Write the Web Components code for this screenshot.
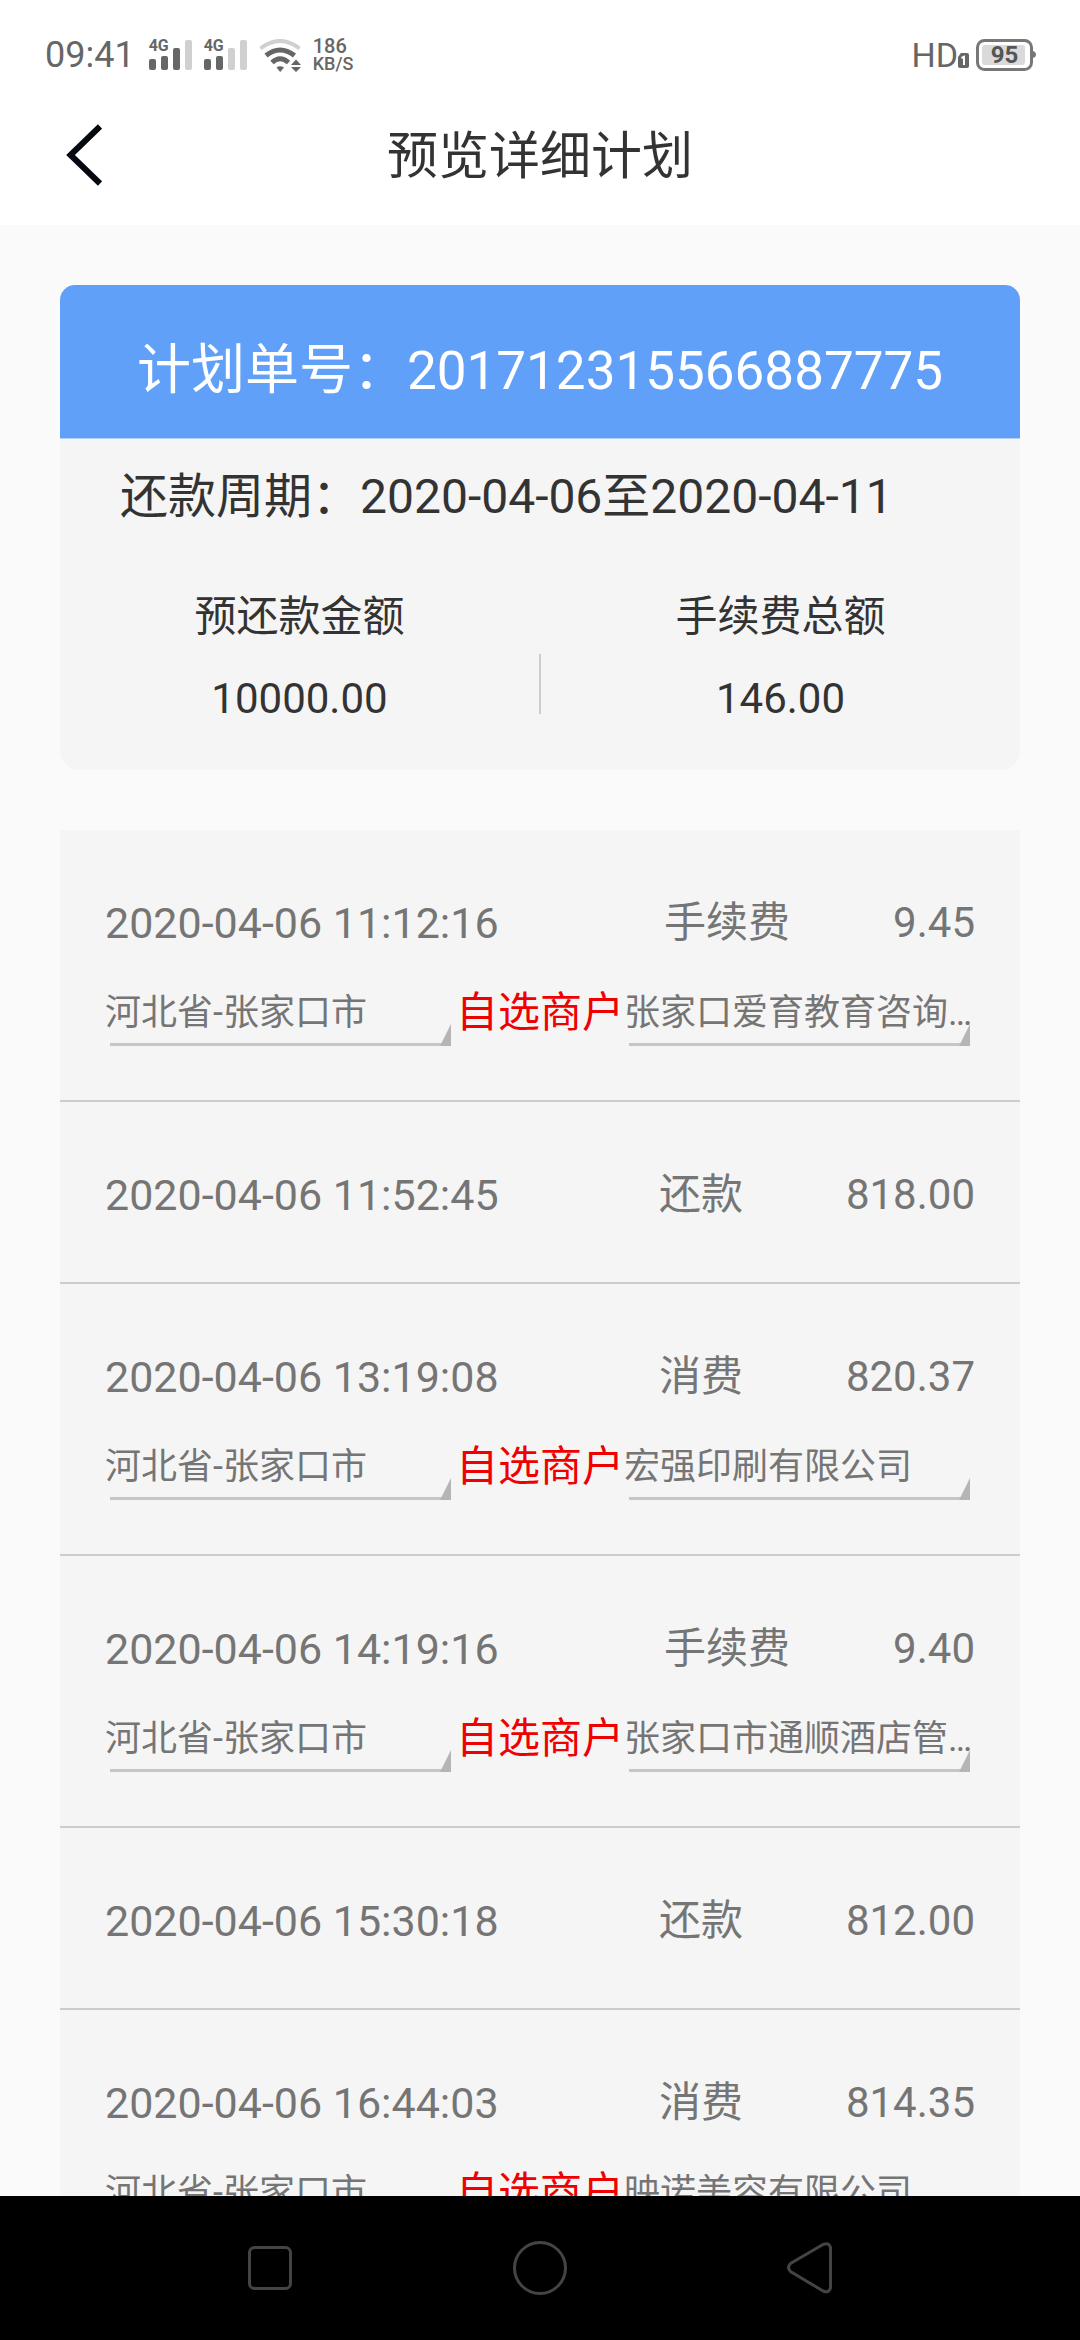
<!DOCTYPE html>
<html lang="zh-CN">
<head>
<meta charset="utf-8">
<meta name="viewport" content="width=device-width, initial-scale=1">
<title>预览详细计划</title>
<style>
  html, body { margin: 0; height: 100%; }
  body { font-family: Roboto, "Noto Sans CJK SC", sans-serif; background: #fafafa; color: #333; }
</style>
</head>
<body>
<plan-screen>
  <status-bar slot="top" time="09:41" rate="186" unit="KB/S" battery="95"></status-bar>
  <title-bar slot="top">预览详细计划</title-bar>

  <plan-card number="201712315566887775" period="2020-04-06至2020-04-11">
    <plan-total label="预还款金额">10000.00</plan-total>
    <plan-total label="手续费总额">146.00</plan-total>
  </plan-card>

  <plan-list>
    <plan-entry time="2020-04-06 11:12:16" type="手续费" amount="9.45" city="河北省-张家口市" merchant="张家口爱育教育咨询…"></plan-entry>
    <plan-entry time="2020-04-06 11:52:45" type="还款" amount="818.00"></plan-entry>
    <plan-entry time="2020-04-06 13:19:08" type="消费" amount="820.37" city="河北省-张家口市" merchant="宏强印刷有限公司"></plan-entry>
    <plan-entry time="2020-04-06 14:19:16" type="手续费" amount="9.40" city="河北省-张家口市" merchant="张家口市通顺酒店管…"></plan-entry>
    <plan-entry time="2020-04-06 15:30:18" type="还款" amount="812.00"></plan-entry>
    <plan-entry time="2020-04-06 16:44:03" type="消费" amount="814.35" city="河北省-张家口市" merchant="映诺美容有限公司"></plan-entry>
  </plan-list>

  <system-nav slot="bottom"></system-nav>
</plan-screen>

<script>
  class BaseElement extends HTMLElement {
    connectedCallback() {
      if (this.shadowRoot) return;
      this.attachShadow({ mode: 'open' }).innerHTML = this.render();
    }
    attr(name) { return this.getAttribute(name) || ''; }
  }

  customElements.define('plan-screen', class extends BaseElement {
    render() {
      return `
        <style>
          :host { display: flex; flex-direction: column; height: 100vh; }
          header, footer { flex: none; }
          header { background: #fff; }
          main { flex: 1; min-height: 0; overflow-y: auto; scrollbar-width: none;
                 display: flex; flex-direction: column; gap: 60px; padding: 60px 60px 0; }
          main::-webkit-scrollbar { display: none; }
        </style>
        <header><slot name="top"></slot></header>
        <main><slot></slot></main>
        <footer><slot name="bottom"></slot></footer>`;
    }
  });

  customElements.define('signal-icon', class extends BaseElement {
    render() {
      const level = Number(this.attr('level'));
      const tops = [20, 17, 9, 1];
      const bars = tops.map((y, i) =>
        `<rect x="${i * 12}" y="${y}" width="7" height="${31 - y}" rx="2" fill="${i < level ? '#666' : '#d0d0d0'}"/>`).join('');
      return `
        <style>
          :host { display: block; position: relative; width: 43px; height: 32px; }
          svg { display: block; }
          span { position: absolute; left: 0; top: 0; font-size: 16px; line-height: 14px; font-weight: 700; color: #666; }
        </style>
        <svg width="43" height="32" viewBox="0 0 43 32" aria-hidden="true">${bars}</svg>
        <span>4G</span>`;
    }
  });

  customElements.define('status-bar', class extends BaseElement {
    render() {
      return `
        <style>
          :host { display: flex; justify-content: space-between; align-items: center;
                  height: 60px; padding: 25px 44px 0 45px; color: #666; }
          .group { display: flex; align-items: center; }
          .left { gap: 12px; }
          .time { font-size: 36px; line-height: 42px; margin-right: 2px; }
          .rate { display: flex; flex-direction: column; font-weight: 500; }
          .rate b { font-weight: 500; font-size: 20px; line-height: 17px; }
          .rate i { font-style: normal; font-size: 18px; line-height: 17px; }
          .hd { font-size: 34px; line-height: 42px; }
          .sim { width: 11px; height: 15px; margin: 10px 7px 0 0; }
          .battery { position: relative; width: 60px; height: 32px; }
          .battery span { position: absolute; left: 0; top: 0; width: 57px; text-align: center;
                          font-size: 24px; line-height: 33px; font-weight: 700; color: #555; }
          svg { display: block; }
        </style>
        <div class="group left">
          <span class="time">${this.attr('time')}</span>
          <signal-icon level="3"></signal-icon>
          <signal-icon level="2"></signal-icon>
          <svg width="42" height="33" viewBox="0 0 42 33" fill="none" aria-hidden="true">
            <path d="M1.500 9.500Q21 -5.500 40.500 9.500" stroke="#d0d0d0" stroke-width="4"/>
            <path d="M7 16.500Q21 5.500 35.500 16.500" stroke="#666" stroke-width="5"/>
            <path d="M13 23.500Q21 16 29.500 23.500" stroke="#666" stroke-width="5"/>
            <path d="M17.500 28.500Q21 26 25 28.500L21.200 33Z" fill="#666"/>
            <path d="M37 20.500L42 26H32ZM32 28H42L37 33Z" fill="#666"/>
          </svg>
          <span class="rate"><b>${this.attr('rate')}</b><i>${this.attr('unit')}</i></span>
        </div>
        <div class="group">
          <span class="hd">HD</span>
          <svg class="sim" viewBox="0 0 11 15" aria-hidden="true">
            <path d="M3 0H9Q11 0 11 2V13Q11 15 9 15H2Q0 15 0 13V4Z" fill="#666"/>
            <path d="M3.500 5L6 3.800V12" stroke="#fff" stroke-width="2" fill="none"/>
          </svg>
          <div class="battery">
            <svg width="60" height="32" viewBox="0 0 60 32" aria-hidden="true">
              <rect x="1.500" y="1.500" width="54" height="29" rx="7" fill="#fff" stroke="#777" stroke-width="3"/>
              <rect x="6" y="6" width="43" height="20" rx="3" fill="#dadada"/>
              <path d="M57 12Q60 13 60 15.500Q60 18 57 19Z" fill="#777"/>
            </svg>
            <span>${this.attr('battery')}</span>
          </div>
        </div>`;
    }
  });

  customElements.define('title-bar', class extends BaseElement {
    render() {
      return `
        <style>
          :host { display: grid; grid-template-columns: 120px 1fr 120px; align-items: center; height: 140px; }
          button { display: flex; justify-content: flex-end; align-items: center; height: 140px;
                   padding: 0 18px 0 0; border: 0; background: none; }
          h1 { margin: 0; padding-top: 4px; text-align: center; font-size: 51px; line-height: 72px; font-weight: 400; }
        </style>
        <button type="button" aria-label="返回">
          <svg width="36" height="62" viewBox="0 0 36 62" fill="none" aria-hidden="true">
            <path d="M34 2.500L4.500 31L34 59.500" stroke="#050a10" stroke-width="6"/>
          </svg>
        </button>
        <h1><slot></slot></h1>`;
    }
  });

  customElements.define('plan-card', class extends BaseElement {
    render() {
      return `
        <style>
          :host { display: block; flex: none; background: #f5f5f5; border-radius: 15px 15px 20px 20px; overflow: hidden; }
          .number { padding: 50px 0 31px; background: #60a0f9; border-bottom: 1px solid #b5d0f6; color: #fff;
                    text-align: center; font-size: 54px; line-height: 72px; }
          .number span { font-size: 53px; }
          .period { padding: 22px 60px 20px; font-size: 48px; line-height: 72px; }
          .totals { display: grid; grid-template-columns: 1fr 2px 1fr; align-items: end; padding: 34px 0 41px; }
          .rule { height: 60px; margin-bottom: 15px; background: #ccc; }
        </style>
        <div class="number">计划单号：<span>${this.attr('number')}</span></div>
        <div class="period">还款周期：${this.attr('period')}</div>
        <div class="totals"><slot name="first"></slot><div class="rule"></div><slot name="second"></slot></div>`;
    }
    connectedCallback() {
      const [first, second] = this.querySelectorAll('plan-total');
      first.slot = 'first';
      second.slot = 'second';
      super.connectedCallback();
    }
  });

  customElements.define('plan-total', class extends BaseElement {
    render() {
      return `
        <style>
          :host { display: flex; flex-direction: column; gap: 22px; text-align: center; font-size: 42px; line-height: 60px; }
        </style>
        <span>${this.attr('label')}</span>
        <span><slot></slot></span>`;
    }
  });

  customElements.define('plan-list', class extends BaseElement {
    render() {
      return `
        <style>:host { display: block; flex: none; background: #f5f5f5; }</style>
        <slot></slot>`;
    }
  });

  customElements.define('line-select', class extends BaseElement {
    render() {
      return `
        <style>
          :host { display: block; position: relative; flex: 1; min-width: 0; height: 90px; }
          select { display: block; width: 100%; height: 90px; margin: 0; padding: 0; border: 0; border-radius: 0;
                   appearance: none; background: none; color: inherit; font: inherit; font-size: 36px; line-height: 52px;
                   text-overflow: ellipsis; opacity: 1; }
          .line, .corner { position: absolute; right: 5px; bottom: 12px; pointer-events: none; }
          .line { left: 5px; height: 3px; background: #c6c6c6; }
          .corner { width: 11px; height: 22px; background: #b5b5b5; clip-path: polygon(100% 0, 100% 100%, 0 100%); }
        </style>
        <select aria-label="${this.attr('label')}"><option>${this.attr('value')}</option></select>
        <span class="line"></span>
        <span class="corner"></span>`;
    }
  });

  customElements.define('plan-entry', class extends BaseElement {
    render() {
      const picker = this.hasAttribute('city') ? `
        <div class="row">
          <line-select label="城市" value="${this.attr('city')}"></line-select>
          <span class="pick">自选商户</span>
          <line-select label="商户" value="${this.attr('merchant')}"></line-select>
        </div>` : '';
      return `
        <style>
          :host { display: block; padding: 48px 45px 42px; border-bottom: 2px solid #ccc; color: #757575;
                  font-size: 42px; line-height: 60px; }
          .row { display: flex; align-items: center; height: 90px; }
          time { font-size: 43px; }
          .type { margin: 0 103px 0 auto; }
          .pick { color: #f00000; }
        </style>
        <div class="row">
          <time>${this.attr('time')}</time>
          <span class="type">${this.attr('type')}</span>
          <span>${this.attr('amount')}</span>
        </div>${picker}`;
    }
  });

  customElements.define('system-nav', class extends BaseElement {
    render() {
      return `
        <style>
          :host { display: flex; height: 144px; padding: 0 12.5%; background: #000; }
          button { flex: 1; display: flex; align-items: center; justify-content: center; padding: 0; border: 0; background: none; }
          svg { fill: none; stroke: #444; stroke-width: 3; }
        </style>
        <button type="button" aria-label="最近任务">
          <svg width="56" height="56" viewBox="0 0 56 56"><rect x="7.500" y="7.500" width="41" height="41" rx="5"/></svg>
        </button>
        <button type="button" aria-label="主页">
          <svg width="56" height="56" viewBox="0 0 56 56"><circle cx="28" cy="28" r="25.500"/></svg>
        </button>
        <button type="button" aria-label="返回">
          <svg width="56" height="56" viewBox="0 0 56 56">
            <path d="M41 4.500L8.500 23.500Q4.500 27.500 8.500 31.500L41 51Q47 53.500 48.500 48V7.500Q47 2 41 4.500Z"/>
          </svg>
        </button>`;
    }
  });
</script>
</body>
</html>
